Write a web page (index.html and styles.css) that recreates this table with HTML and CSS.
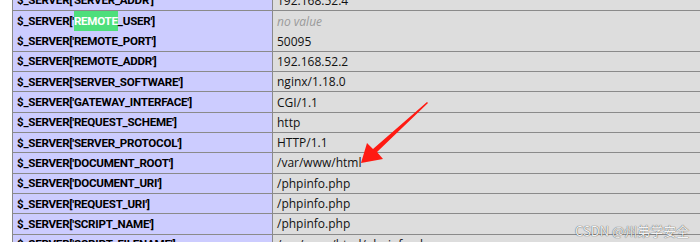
FILE: index.html
```html
<!DOCTYPE html>
<html>
<head>
<meta charset="utf-8">
<link rel="stylesheet" href="styles.css">
</head>
<body>
<div class="view">
  <div class="table">
    <div class="row"><div class="k">$_SERVER['SERVER_ADDR']</div><div class="v">192.168.52.4</div></div>
    <div class="row"><div class="k">$_SERVER['<span class="hl">REMOTE</span>_USER']</div><div class="v"><i class="nv">no value</i></div></div>
    <div class="row"><div class="k">$_SERVER['REMOTE_PORT']</div><div class="v">50095</div></div>
    <div class="row"><div class="k">$_SERVER['REMOTE_ADDR']</div><div class="v">192.168.52.2</div></div>
    <div class="row"><div class="k">$_SERVER['SERVER_SOFTWARE']</div><div class="v">nginx/1.18.0</div></div>
    <div class="row"><div class="k">$_SERVER['GATEWAY_INTERFACE']</div><div class="v">CGI/1.1</div></div>
    <div class="row"><div class="k">$_SERVER['REQUEST_SCHEME']</div><div class="v">http</div></div>
    <div class="row"><div class="k">$_SERVER['SERVER_PROTOCOL']</div><div class="v">HTTP/1.1</div></div>
    <div class="row"><div class="k">$_SERVER['DOCUMENT_ROOT']</div><div class="v">/var/www/html</div></div>
    <div class="row"><div class="k">$_SERVER['DOCUMENT_URI']</div><div class="v">/phpinfo.php</div></div>
    <div class="row"><div class="k">$_SERVER['REQUEST_URI']</div><div class="v">/phpinfo.php</div></div>
    <div class="row"><div class="k">$_SERVER['SCRIPT_NAME']</div><div class="v">/phpinfo.php</div></div>
    <div class="row"><div class="k">$_SERVER['SCRIPT_FILENAME']</div><div class="v">/var/www/html/phpinfo.php</div></div>
  </div>
  <svg class="arrow" width="80" height="70" viewBox="0 0 80 70">
    <polygon points="67,1 68,2 17,51 23,58 1,62 7,42 13,48" fill="#ff1a12"/>
  </svg>
  <div class="mark">CSDN @州弟学安全</div>
</div>
</body>
</html>
```
FILE: styles.css
```css
html, body {
  margin: 0;
  padding: 0;
  background: #fff;
}
.view {
  position: relative;
  width: 700px;
  height: 242px;
  overflow: hidden;
}
.table {
  margin-top: -9.3px;
  margin-left: 12px;
  width: 720px;
  border-left: 1px solid #888;
  font-family: "Open Sans", "Noto Sans", sans-serif;
  font-size: 12px;
  color: #111;
}
.row {
  display: grid;
  grid-template-columns: 260px 1fr;
  height: 20.33px;
  box-sizing: border-box;
  border-bottom: 1px solid #8a8a8a;
}
.k {
  background: #ccccff;
  font-family: Roboto, "Open Sans", sans-serif;
  font-weight: bold;
  font-size: 11.6px;
  letter-spacing: -0.25px;
  color: #000;
  padding-left: 4px;
  border-right: 1px solid #8a8a8a;
  display: flex;
  align-items: center;
}
.v {
  background: #dddddd;
  padding-left: 4px;
  display: flex;
  align-items: center;
}
.nv {
  color: #9a9a9a;
}
.hl {
  background: #4ddf7b;
  color: #fff;
  padding: 3px 0;
}
.arrow {
  position: absolute;
  left: 360px;
  top: 101px;
}
.mark {
  position: absolute;
  left: 575px;
  top: 221px;
  font-family: "Noto Sans CJK SC", "Noto Sans", sans-serif;
  font-size: 13px;
  color: rgba(255,255,255,0.95);
  text-shadow: 0 0 1px rgba(0,0,0,0.6), 0 0 1px rgba(0,0,0,0.4);
}
```
